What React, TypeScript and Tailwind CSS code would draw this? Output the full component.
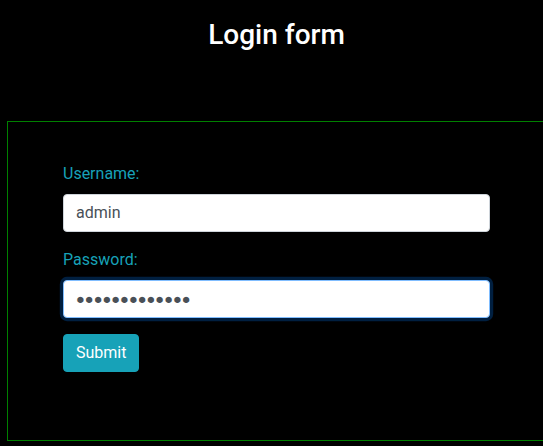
export default function App() {
  return (
    <div className="min-h-[446px] overflow-hidden bg-black font-['Roboto',sans-serif]">
      <h2 className="w-[553px] pt-[18px] text-center text-[28px] font-medium leading-[1.2] text-white">
        Login form
      </h2>

      <div className="ml-[7px] mt-[69px] h-[320px] w-[600px] border border-[#008000] pl-[55px] pt-[40px]">
        <form className="w-[427px]" onSubmit={(e) => e.preventDefault()}>
          <div className="mb-4">
            <label className="mb-2 block text-base leading-6 text-[#17a2b8]">Username:</label>
            <input
              type="text"
              defaultValue="admin"
              className="block h-[38px] w-full rounded border border-[#ced4da] bg-white px-3 text-base text-[#495057] outline-none"
            />
          </div>
          <div className="mb-4">
            <label className="mb-2 block text-base leading-6 text-[#17a2b8]">Password:</label>
            <input
              type="text"
              readOnly
              value="●●●●●●●●●●●●●"
              className="block h-[38px] w-full rounded border border-[#80bdff] bg-white px-3 font-['Liberation_Sans',sans-serif] text-[14.6px] text-[#495057] shadow-[0_0_0_3.2px_rgba(0,123,255,0.25)] outline-none"
            />
          </div>
          <button
            type="submit"
            className="h-[38px] rounded border border-[#17a2b8] bg-[#17a2b8] px-3 text-base leading-6 text-white"
          >
            Submit
          </button>
        </form>
      </div>
    </div>
  );
}
